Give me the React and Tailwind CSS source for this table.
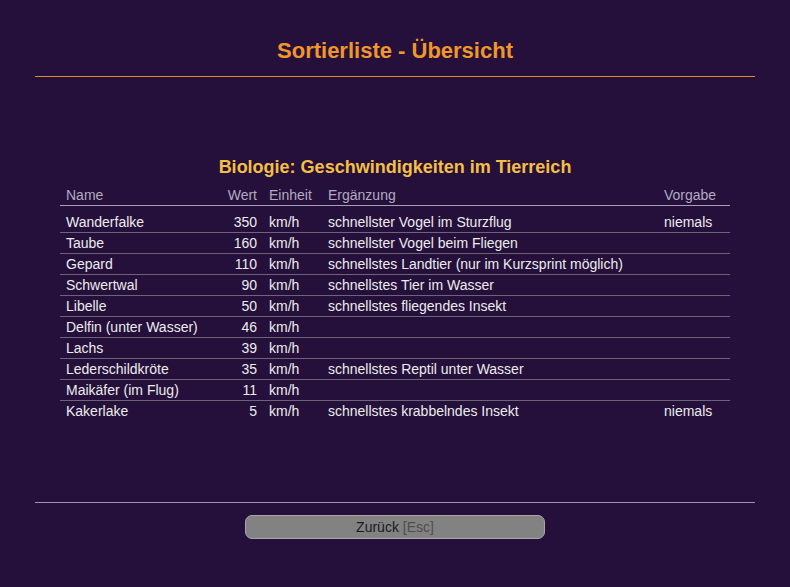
import React from 'react'

const rows = [
  ['Wanderfalke', '350', 'km/h', 'schnellster Vogel im Sturzflug', 'niemals'],
  ['Taube', '160', 'km/h', 'schnellster Vogel beim Fliegen', ''],
  ['Gepard', '110', 'km/h', 'schnellstes Landtier (nur im Kurzsprint möglich)', ''],
  ['Schwertwal', '90', 'km/h', 'schnellstes Tier im Wasser', ''],
  ['Libelle', '50', 'km/h', 'schnellstes fliegendes Insekt', ''],
  ['Delfin (unter Wasser)', '46', 'km/h', '', ''],
  ['Lachs', '39', 'km/h', '', ''],
  ['Lederschildkröte', '35', 'km/h', 'schnellstes Reptil unter Wasser', ''],
  ['Maikäfer (im Flug)', '11', 'km/h', '', ''],
  ['Kakerlake', '5', 'km/h', 'schnellstes krabbelndes Insekt', 'niemals'],
]

const cols = 'grid grid-cols-[145px_58px_59px_336px_72px]'

export default function App() {
  return (
    <div className="w-[790px] h-[587px] bg-[#24103a] [font-family:'Liberation_Sans',Arial,sans-serif] flex flex-col px-[35px]">
      <h1 className="text-center text-[22px] font-bold text-[#f1962a] pt-[36px] h-[76px] leading-[30px]">
        Sortierliste - Übersicht
      </h1>
      <div className="h-px bg-[#e08a2c]" />

      <div className="mt-[80px] mx-[25px]">
        <h2 className="text-center text-[18px] font-bold text-[#f4bf42] leading-5 h-[28px]">
          Biologie: Geschwindigkeiten im Tierreich
        </h2>
        <div className={`${cols} text-[14px] text-[#b3aac2] leading-[20px] border-b border-[#a8a0b4]`}>
          <div className="px-[6px]">Name</div>
          <div className="px-[6px] text-right">Wert</div>
          <div className="px-[6px]">Einheit</div>
          <div className="px-[6px]">Ergänzung</div>
          <div className="px-[6px]">Vorgabe</div>
        </div>
        <div className="pt-[6px]">
          {rows.map((r, i) => (
            <div
              key={i}
              className={`${cols} text-[14px] text-[#ececec] h-[21px] leading-[20px] ${i < rows.length - 1 ? 'border-b border-[#6e6478]' : ''}`}
            >
              <div className="px-[6px] whitespace-nowrap">{r[0]}</div>
              <div className="px-[6px] text-right">{r[1]}</div>
              <div className="px-[6px]">{r[2]}</div>
              <div className="px-[6px] whitespace-nowrap">{r[3]}</div>
              <div className="px-[6px]">{r[4]}</div>
            </div>
          ))}
        </div>
      </div>

      <div className="mt-auto mb-[48px]">
        <div className="h-px bg-[#9e94ac]" />
        <div className="flex justify-center pt-[12px]">
          <button className="w-[300px] h-[24px] rounded-[7px] bg-[#828282] border border-[#a6a6a6] text-[14px] text-[#1a1a1a] leading-none">
            Zurück <span className="text-[#4e4e4e]">[Esc]</span>
          </button>
        </div>
      </div>
    </div>
  )
}
